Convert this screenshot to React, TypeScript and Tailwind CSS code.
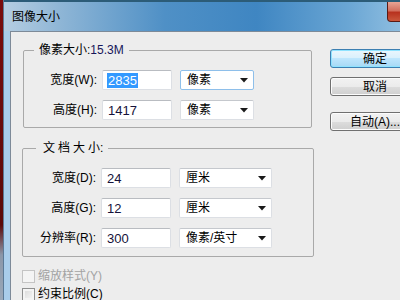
import React from "react";

const font = "font-['Liberation_Sans','Noto_Sans_CJK_SC',sans-serif]";

interface FieldProps {
  label: string;
  value: string;
  unit: string;
  unitWidth: string;
  focused?: boolean;
  selected?: boolean;
}

function Arrow() {
  return (
    <svg width="8" height="5" viewBox="0 0 8 5" className="shrink-0">
      <path d="M0 0H8L4 4.5Z" fill="#1a1a1a" />
    </svg>
  );
}

function Field({ label, value, unit, unitWidth, focused, selected }: FieldProps) {
  return (
    <div className="flex items-center h-[20px]">
      <div className="w-[74px] text-right text-[12px] leading-[16px] text-black pr-px">
        {label}
      </div>
      <div className="ml-[4px] w-[70px] h-[20px] bg-white border border-[#dcdfe4] border-t-[#b9bcc1] rounded-[2px] flex items-center pl-[4px]">
        {selected ? (
          <span className="bg-[#3399ff] text-white text-[13px] leading-[15px] px-px">
            {value}
          </span>
        ) : (
          <span className="text-[#15123a] text-[13px] leading-[15px] px-px">
            {value}
          </span>
        )}
      </div>
      <div
        className={`ml-[8px] ${unitWidth} h-[20px] bg-white border rounded-[2px] flex items-center justify-between pl-[6px] pr-[5px] ${
          focused ? "border-[#8ebfea]" : "border-[#dcdfe4] border-t-[#c5c8cd]"
        }`}
      >
        <span className="text-[12px] leading-[16px] text-black">{unit}</span>
        <Arrow />
      </div>
    </div>
  );
}

function Button({ label, primary }: { label: string; primary?: boolean }) {
  return (
    <div
      className={`w-[90px] h-[19px] rounded-[3px] border flex items-center justify-center text-[12px] leading-[16px] text-black ${
        primary
          ? "border-[#3c7fb1] bg-[linear-gradient(#eaf6fd_0%,#d9f0fc_50%,#bee6fd_50%,#a7d9f5_100%)] shadow-[inset_0_0_0_1px_#8fe3ff]"
          : "border-[#707070] bg-[linear-gradient(#f2f2f2_0%,#ebebeb_50%,#dddddd_50%,#cfcfcf_100%)] shadow-[inset_0_0_0_1px_#fcfcfc]"
      }`}
    >
      {label}
    </div>
  );
}

function Checkbox({ label, disabled }: { label: string; disabled?: boolean }) {
  return (
    <div className="flex items-center h-[18px]">
      <div
        className={`w-[13px] h-[13px] border ${
          disabled
            ? "border-[#c4c4c4] bg-[#f4f4f4]"
            : "border-[#8e8f8f] bg-[linear-gradient(135deg,#d9d9d9,#f7f7f7)] shadow-[inset_0_0_0_2px_#f4f4f4]"
        }`}
      />
      <span
        className={`ml-[3px] text-[12px] leading-[16px] ${
          disabled ? "text-[#a3a3a3]" : "text-black"
        }`}
      >
        {label}
      </span>
    </div>
  );
}

export default function App() {
  return (
    <div
      className={`w-[400px] h-[300px] overflow-hidden flex pl-[3px] bg-[linear-gradient(#7a0c0c_0%,#5a0a0a_75%,#8b97a8_85%,#9aa8b8_100%)] ${font}`}
    >
      <div className="w-[460px] shrink-0 flex flex-col bg-[#a9cdea] border-l border-[#5b7a96]">
        {/* title bar */}
        <div className="relative h-[31px] shrink-0 flex items-center pl-[8px] bg-[linear-gradient(90deg,#b5cde1_0%,#8fb6d6_12%,#4f90c6_35%,#3f86c2_55%,#6aa6d4_75%,#94c1e2_88%,#9ec6e4_100%)] border-t-[2px] border-[#2c5c78]">
          <span className="text-[12px] leading-[16px] text-black">图像大小</span>
          <div className="absolute left-[383px] top-0 w-[44px] h-[20px] rounded-b-[4px] border border-t-0 border-[#5a1a14] bg-[linear-gradient(#e8a495_0%,#d2705f_45%,#b8321f_55%,#c9573c_100%)]" />
        </div>
        {/* client */}
        <div className="flex-1 flex pl-[6px]">
          <div className="flex-1 flex bg-[#ededed] border-l border-t border-[#7d8a98]">
            <div className="w-[303px] shrink-0 pl-[11px] pt-[10px]">
              <fieldset className="ml-px w-[289px] border border-[#a9a9a9] rounded-[2px] pb-[7px]">
                <legend className="ml-[10px] px-[5px] text-[12px] leading-[16px] text-black">
                  像素大小:<span className="text-[#16165a]">15.3M</span>
                </legend>
                <div className="mt-[12px] flex flex-col gap-[10px]">
                  <Field label="宽度(W):" value="2835" unit="像素" unitWidth="w-[74px]" focused selected />
                  <Field label="高度(H):" value="1417" unit="像素" unitWidth="w-[74px]" />
                </div>
              </fieldset>
              <fieldset className="mt-[12px] w-[292px] border border-[#a9a9a9] rounded-[2px] pb-[8px]">
                <legend className="ml-[13px] pl-[7px] pr-[5px] text-[12px] leading-[16px] text-black">
                  <span className="tracking-[3px]">文档大</span>小:
                </legend>
                <div className="mt-[12px] flex flex-col gap-[10px]">
                  <Field label="宽度(D):" value="24" unit="厘米" unitWidth="w-[93px]" />
                  <Field label="高度(G):" value="12" unit="厘米" unitWidth="w-[93px]" />
                  <Field label="分辨率(R):" value="300" unit="像素/英寸" unitWidth="w-[93px]" />
                </div>
              </fieldset>
              <div className="mt-[10px] flex flex-col">
                <Checkbox label="缩放样式(Y)" disabled />
                <Checkbox label="约束比例(C)" />
              </div>
            </div>
            <div className="ml-[16px] pt-[17px] flex flex-col">
              <Button label="确定" primary />
              <div className="mt-[9px]">
                <Button label="取消" />
              </div>
              <div className="mt-[16px]">
                <Button label="自动(A)..." />
              </div>
            </div>
          </div>
        </div>
      </div>
    </div>
  );
}
